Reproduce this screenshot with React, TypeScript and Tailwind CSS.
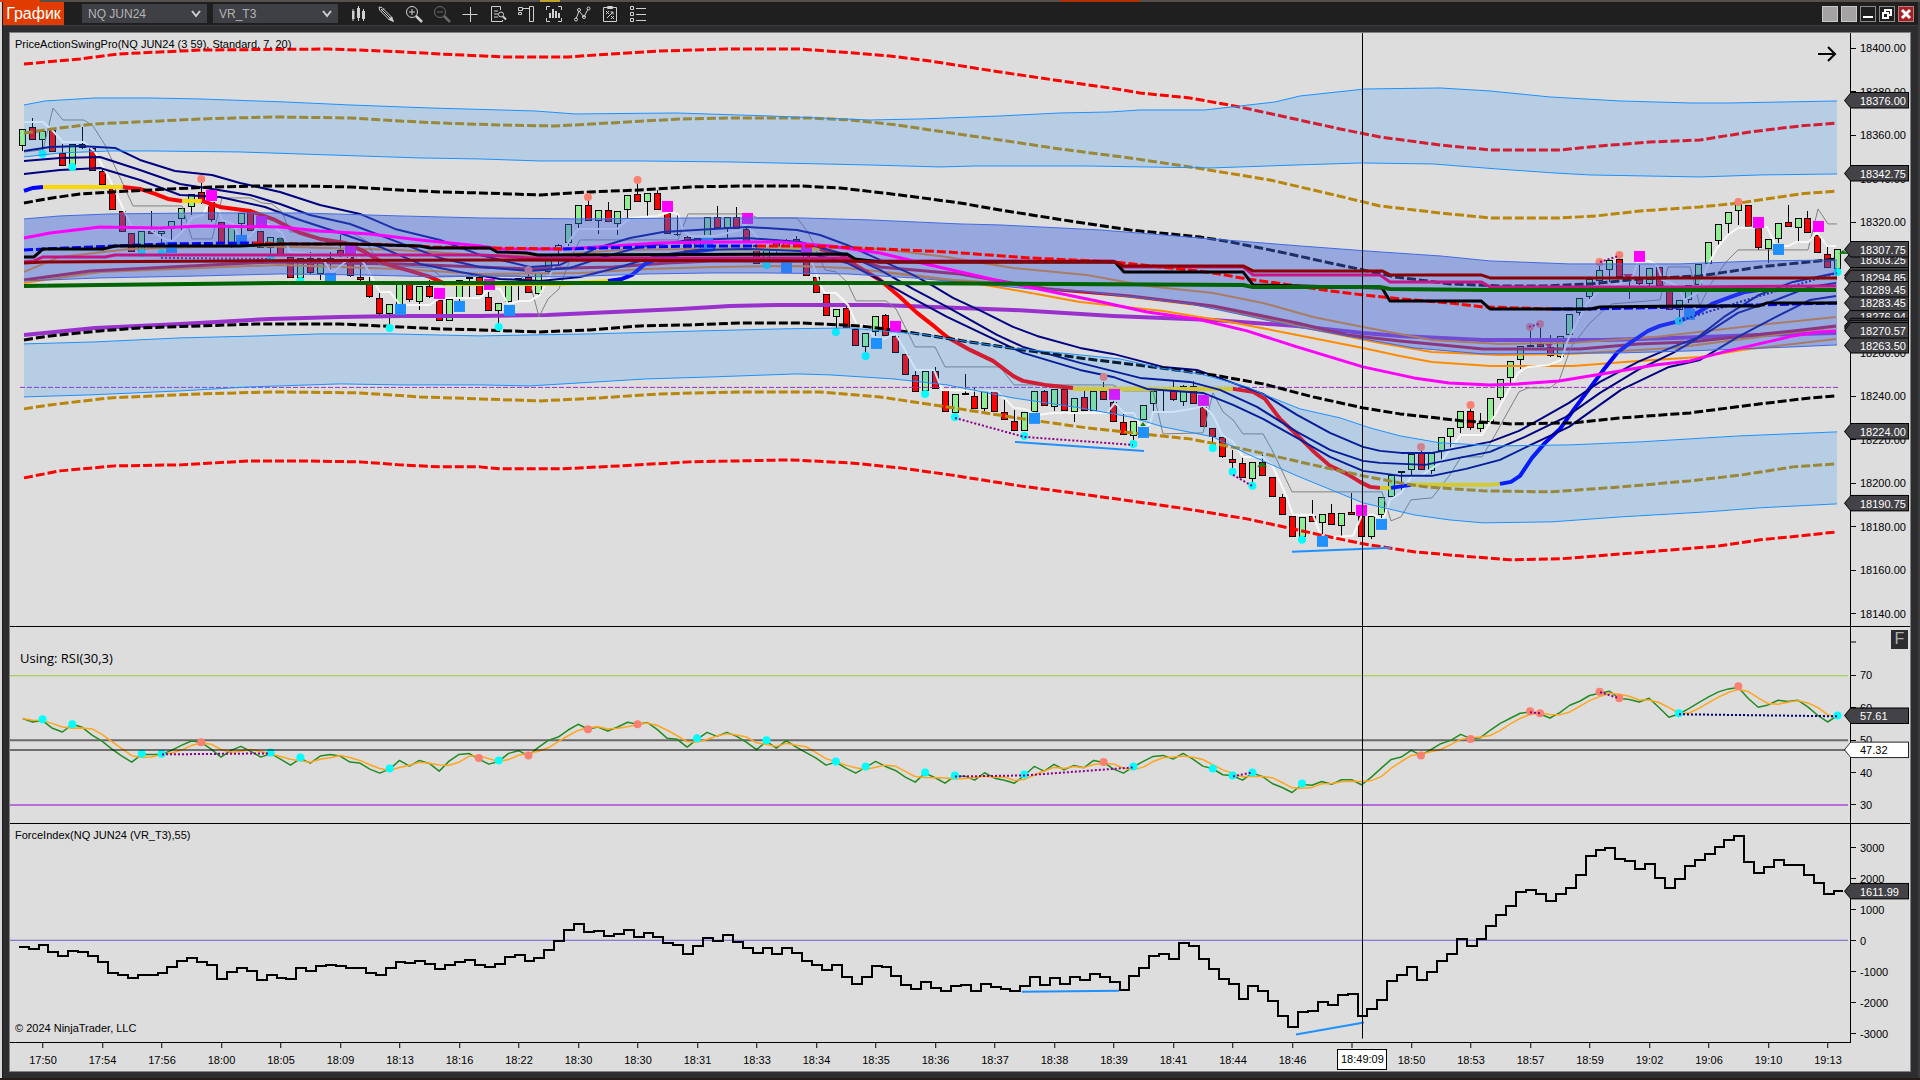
import React from "react";

/* ---------- shared scales ---------- */

const barX = (i: number) => 22.7 + 9.917 * i;

/* [top, bottom, high, low, up] for each bar, in plot units */
type Bar = [number, number, number, number, 0 | 1];
const bars: Bar[] = [
  [129, 146, 129, 151, 1], [127, 140, 118, 140, 0], [131, 140, 131, 150, 1], [130, 152, 130, 152, 0], [153, 166, 144, 166, 0],
  [144, 166, 144, 168, 1], [144, 148, 127, 149, 0], [148, 171, 148, 171, 0], [171, 185, 168, 185, 0], [188, 210, 188, 210, 0],
  [211, 232, 211, 232, 0], [233, 252, 233, 252, 0], [231, 252, 231, 252, 1], [231, 234, 211, 234, 0], [231, 234, 231, 252, 1],
  [221, 229, 221, 242, 1], [208, 219, 208, 230, 1], [194, 207, 194, 215, 1], [192, 203, 182, 204, 0], [202, 220, 202, 222, 0],
  [222, 243, 222, 243, 0], [227, 244, 227, 248, 1], [213, 224, 213, 235, 1], [212, 231, 209, 231, 0], [231, 248, 231, 248, 0],
  [237, 248, 237, 257, 1], [238, 256, 238, 256, 0], [257, 278, 257, 278, 0], [258, 278, 258, 280, 1], [258, 273, 252, 274, 0],
  [258, 274, 258, 280, 1], [258, 259, 252, 272, 1], [250, 256, 235, 257, 0], [257, 276, 257, 277, 0], [277, 280, 263, 281, 0],
  [284, 297, 277, 298, 0], [298, 314, 293, 315, 0], [304, 314, 304, 325, 1], [283, 305, 283, 305, 1], [284, 300, 284, 302, 0],
  [286, 302, 286, 310, 1], [286, 297, 280, 298, 0], [300, 321, 300, 321, 0], [299, 321, 299, 321, 1], [280, 298, 280, 303, 1],
  [277, 279, 277, 298, 1], [277, 295, 273, 295, 0], [297, 311, 292, 311, 0], [303, 311, 303, 323, 1], [284, 302, 284, 305, 1],
  [278, 280, 278, 300, 1], [277, 293, 272, 293, 0], [273, 294, 273, 295, 1], [254, 272, 254, 274, 1], [245, 249, 244, 266, 1],
  [224, 243, 224, 246, 1], [205, 224, 205, 228, 1], [205, 221, 200, 221, 0], [210, 221, 210, 234, 1], [210, 222, 202, 222, 0],
  [211, 224, 211, 235, 1], [195, 210, 195, 218, 1], [194, 202, 183, 202, 0], [193, 202, 193, 216, 1], [193, 210, 190, 210, 0],
  [213, 234, 213, 234, 0], [234, 235, 215, 236, 0], [237, 252, 236, 252, 0], [238, 251, 238, 251, 1], [217, 237, 217, 237, 1],
  [217, 228, 206, 228, 0], [217, 228, 217, 239, 1], [217, 229, 207, 229, 0], [229, 243, 228, 243, 0], [245, 264, 245, 264, 0],
  [247, 260, 247, 263, 1], [240, 249, 239, 255, 0], [240, 251, 239, 251, 1], [239, 250, 236, 250, 0], [252, 276, 252, 276, 0],
  [277, 293, 273, 293, 0], [294, 316, 293, 316, 0], [309, 317, 309, 329, 1], [308, 328, 307, 328, 0], [329, 346, 329, 346, 0],
  [333, 347, 333, 354, 1], [316, 332, 316, 336, 1], [315, 336, 314, 336, 0], [336, 353, 332, 353, 0], [354, 375, 354, 375, 0],
  [375, 392, 371, 392, 0], [371, 391, 371, 391, 1], [371, 389, 367, 389, 0], [390, 412, 390, 412, 0], [394, 413, 394, 413, 1],
  [393, 395, 374, 395, 0], [396, 409, 387, 409, 0], [391, 409, 391, 411, 1], [391, 412, 391, 412, 0], [412, 420, 399, 420, 0],
  [421, 431, 410, 431, 0], [412, 431, 412, 431, 1], [391, 412, 391, 412, 1], [391, 406, 390, 406, 0], [389, 407, 389, 411, 1],
  [389, 411, 389, 411, 0], [398, 412, 398, 422, 1], [397, 411, 387, 411, 0], [391, 411, 391, 411, 1], [391, 400, 382, 400, 0],
  [402, 422, 401, 422, 0], [422, 435, 414, 435, 0], [421, 436, 421, 442, 1], [405, 420, 405, 420, 1], [391, 404, 391, 413, 1],
  [390, 391, 390, 411, 1], [391, 400, 380, 401, 0], [386, 402, 385, 406, 1], [386, 404, 381, 404, 0], [407, 427, 406, 427, 0],
  [428, 437, 428, 445, 0], [437, 457, 437, 458, 0], [459, 463, 450, 468, 0], [463, 478, 457, 478, 0], [462, 479, 462, 483, 1],
  [462, 476, 455, 476, 0], [477, 497, 477, 497, 0], [497, 515, 494, 515, 0], [516, 537, 516, 537, 0], [517, 537, 517, 537, 1],
  [516, 522, 500, 522, 0], [514, 523, 514, 534, 1], [513, 525, 504, 525, 0], [513, 526, 513, 536, 1], [512, 515, 493, 515, 0],
  [516, 537, 516, 537, 0], [516, 537, 516, 539, 1], [497, 515, 497, 518, 1], [475, 497, 475, 497, 1], [471, 473, 471, 492, 1],
  [454, 470, 454, 475, 1], [453, 470, 450, 470, 0], [453, 471, 453, 474, 1], [437, 451, 437, 460, 1], [428, 437, 428, 450, 1],
  [411, 428, 411, 433, 1], [411, 428, 408, 430, 0], [423, 429, 413, 432, 1], [398, 422, 398, 422, 1], [379, 398, 379, 400, 1],
  [361, 378, 361, 383, 1], [346, 360, 346, 369, 1], [345, 347, 330, 347, 1], [344, 347, 327, 347, 0], [347, 356, 335, 357, 0],
  [336, 357, 336, 358, 1], [314, 335, 314, 335, 1], [298, 313, 298, 320, 1], [279, 297, 279, 300, 1], [270, 281, 265, 285, 1],
  [260, 270, 260, 282, 1], [259, 277, 259, 277, 0], [277, 279, 277, 299, 0], [278, 284, 265, 285, 0], [268, 284, 268, 286, 1],
  [267, 286, 267, 286, 0], [287, 310, 286, 310, 0], [300, 310, 300, 318, 1], [285, 300, 285, 303, 1], [264, 285, 264, 285, 1],
  [242, 264, 242, 264, 1], [224, 241, 224, 247, 1], [212, 224, 212, 234, 1], [203, 211, 203, 225, 1], [205, 227, 205, 227, 0],
  [228, 248, 228, 250, 0], [239, 249, 239, 263, 1], [223, 239, 223, 243, 1], [222, 227, 205, 227, 0], [218, 228, 218, 241, 1],
  [218, 233, 211, 233, 0], [235, 253, 235, 253, 0], [254, 268, 247, 268, 0], [249, 269, 249, 269, 1],
];

/* oscillator samples, three units per plot unit */
const rsi = [
  295, 305, 301, 324, 335, 312, 321, 344, 362, 386, 407, 425, 402, 402, 402, 390, 375, 362, 366, 386, 410, 390, 378, 393, 410,
  400, 416, 434, 414, 428, 407, 402, 407, 425, 428, 446, 458, 446, 420, 437, 420, 429, 452, 422, 402, 399, 416, 431, 423, 399,
  391, 406, 381, 360, 350, 329, 312, 326, 320, 332, 320, 306, 312, 307, 328, 354, 357, 380, 357, 336, 348, 336, 348, 366, 388,
  363, 383, 361, 380, 397, 413, 434, 425, 443, 458, 441, 423, 438, 450, 470, 485, 458, 472, 488, 467, 467, 479, 457, 473, 479,
  488, 465, 438, 452, 432, 448, 435, 442, 420, 426, 446, 458, 439, 423, 408, 405, 416, 399, 416, 437, 445, 463, 466, 479, 458,
  468, 489, 501, 516, 492, 494, 483, 491, 478, 478, 493, 470, 443, 417, 410, 390, 404, 388, 370, 360, 342, 355, 352, 329, 309,
  294, 279, 275, 281, 293, 277, 255, 243, 226, 219, 213, 234, 238, 245, 234, 262, 291, 281, 265, 247, 230, 215, 206, 202, 235,
  261, 254, 240, 244, 240, 260, 285, 305, 286,
];

const force = [
  380, 386, 375, 396, 408, 393, 396, 408, 426, 459, 465, 474, 465, 465, 459, 441, 423, 414, 426, 435, 477, 456, 444, 453, 480,
  465, 474, 477, 444, 453, 438, 435, 438, 444, 444, 459, 465, 444, 426, 429, 423, 432, 447, 435, 426, 420, 435, 441, 432, 411,
  405, 423, 414, 390, 363, 330, 312, 336, 333, 348, 342, 330, 351, 339, 351, 369, 375, 402, 378, 354, 363, 345, 366, 384, 399,
  384, 402, 384, 399, 423, 435, 450, 435, 471, 492, 471, 438, 441, 468, 495, 507, 486, 504, 513, 498, 495, 513, 492, 501, 507,
  513, 498, 471, 495, 474, 492, 471, 480, 462, 471, 486, 510, 468, 444, 408, 402, 417, 369, 378, 417, 447, 477, 492, 537, 498,
  513, 543, 588, 621, 576, 573, 546, 555, 525, 522, 588, 567, 540, 483, 465, 441, 480, 456, 423, 402, 357, 378, 357, 318, 285,
  258, 216, 210, 222, 243, 222, 204, 165, 108, 90, 84, 117, 123, 147, 132, 174, 204, 177, 138, 120, 102, 81, 60, 48, 126, 159,
  141, 120, 135, 135, 165, 189, 222, 213,
];

const rsiY = (v: number) => 620 + v / 3;
const forceY = (v: number) => 820 + v / 3;

const rsiLine = rsi.map((v, i) => `${barX(i).toFixed(1)},${rsiY(v).toFixed(1)}`).join(" ");
const rsiSignal = rsi
  .map((_, i) => {
    const part = rsi.slice(Math.max(0, i - 2), i + 1);
    const mean = part.reduce((a, b) => a + b, 0) / part.length;
    return `${barX(i).toFixed(1)},${rsiY(mean).toFixed(1)}`;
  })
  .join(" ");
const forceLine = force
  .map((v, i) => {
    const y = Math.round(forceY(v));
    return `${Math.round(22.7 + 9.917 * (i - 0.4))},${y} ${Math.round(22.7 + 9.917 * (i + 0.6))},${y}`;
  })
  .join(" ");

/* ---------- price overlays ---------- */

const bands = [
  {
    fill: "rgba(30,144,255,0.2)",
    stroke: "#1e90ff",
    top: "24,105 45,101 95,98 150,98 200,99 285,102 350,105 430,108 535,111 575,114 676,113 770,116 870,120 920,119 1000,116 1060,113 1110,112 1140,110 1205,110 1240,106 1275,102 1300,96 1365,89 1440,88 1490,91 1550,97 1620,101 1690,103 1730,103 1837,101",
    bottom: "1837,174 1760,175 1700,177 1590,175 1554,173 1497,169 1433,164 1361,163 1297,165 1211,168 1083,166 976,166 940,167 869,165 730,162 640,161 540,161 480,159 420,158 330,155 240,152 150,151 110,151 60,153 24,157",
  },
  {
    fill: "rgba(30,144,255,0.2)",
    stroke: "#1e90ff",
    top: "24,344 95,342 180,338 260,336 320,334 390,334 480,336 590,334 700,331 780,329 850,328 880,331 920,334 963,341 1010,348 1080,355 1120,359 1160,368 1200,374 1247,387 1270,397 1300,409 1340,418 1370,428 1400,436 1440,443 1500,446 1570,445 1640,442 1740,436 1837,432",
    bottom: "1837,504 1759,508 1707,512 1621,517 1552,522 1483,523 1449,520 1414,515 1380,507 1363,503 1297,476 1247,454 1213,437 1163,427 1130,417 1080,408 1013,398 947,385 893,379 830,375 797,374 713,377 647,379 580,383 530,386 480,385 400,385 340,384 250,387 180,391 90,395 24,397",
  },
  {
    fill: "rgba(65,105,225,0.45)",
    stroke: "#4169e1",
    top: "24,219 60,216 110,214 200,213 300,213 400,216 480,218 580,219 700,218 800,218 870,220 960,224 1000,225 1100,230 1200,238 1300,246 1380,252 1440,256 1490,261 1570,264 1680,264 1760,261 1837,260",
    bottom: "1837,345 1793,347 1690,351 1621,353 1483,354 1414,348 1363,339 1297,327 1247,316 1190,304 1130,297 1080,291 1030,289 980,284 913,278 847,274 763,273 713,273 647,274 563,277 480,276 440,277 360,275 280,274 200,276 100,278 24,281",
  },
];

const dashed = [
  { c: "#ff0000", p: "24,64 80,59 118,54 202,50 328,49 358,50 404,52 440,54 505,57 568,57 610,54 660,51 726,49 800,49 840,52 890,56 930,61 1000,72 1054,80 1110,88 1140,93 1190,98 1240,107 1290,118 1340,129 1380,137 1440,145 1490,150 1560,150 1600,146 1650,142 1700,140 1750,132 1800,126 1837,123" },
  { c: "#b8860b", p: "24,133 52,129 94,124 160,121 200,119 235,118 275,117 350,118 400,121 440,123 500,125 555,126 610,123 680,119 730,118 810,118 850,120 897,125 930,130 1000,140 1060,149 1130,158 1190,167 1270,180 1330,194 1380,206 1440,213 1490,218 1560,218 1596,216 1640,211 1700,207 1740,203 1800,194 1837,191" },
  { c: "#000000", p: "24,203 52,198 80,194 112,192 170,189 215,187 260,186 300,186 350,187 400,190 440,192 480,193 540,195 590,192 640,190 690,187 740,186 800,186 840,188 900,195 960,203 1000,210 1063,220 1130,230 1200,237 1230,242 1280,252 1330,263 1363,270 1395,277 1450,284 1500,286 1545,286 1590,284 1640,279 1700,276 1760,267 1837,259" },
  { c: "#000000", p: "24,340 50,336 100,331 140,328 200,326 260,324 340,324 400,327 440,329 480,330 540,332 590,330 640,326 690,325 740,323 800,323 860,326 900,331 963,341 1023,350 1087,359 1153,367 1213,375 1263,384 1313,397 1363,408 1400,414 1463,421 1511,424 1573,423 1621,418 1690,413 1752,405 1810,398 1836,396" },
  { c: "#b8860b", p: "24,409 50,405 110,398 200,394 275,392 360,393 420,397 480,399 540,401 600,398 660,394 740,392 820,392 880,397 960,409 1023,419 1087,428 1133,433 1190,439 1247,450 1313,465 1363,476 1400,483 1425,487 1483,491 1552,492 1621,487 1690,481 1742,475 1793,467 1836,464" },
  { c: "#ff0000", p: "24,478 60,471 115,466 180,465 250,461 300,461 360,462 400,465 440,467 480,467 500,469 560,469 620,466 690,462 790,460 850,463 900,468 950,475 1020,486 1087,495 1180,508 1247,519 1320,535 1363,544 1414,552 1460,556 1510,560 1560,559 1610,555 1660,551 1720,546 1760,540 1800,536 1837,532" },
];

const lowerLines = [
  { c: "#9932cc", w: 4, p: "24,335 95,328 180,324 270,319 340,317 400,316 480,316 547,315 613,312 680,309 730,306 780,305 880,305 960,308 1013,310 1113,316 1213,320 1297,326 1363,333 1400,336 1483,340 1604,340 1673,338 1759,335 1836,333" },
  { c: "#ff8c00", w: 2, p: "24,272 60,257 130,249 200,247 250,246 400,250 480,255 540,256 620,250 700,249 800,247 880,249 947,257 1013,268 1087,275 1147,286 1213,293 1263,303 1313,317 1363,327 1400,334 1432,340 1500,344 1569,343 1655,337 1690,333 1759,325 1836,317" },
  { c: "#ff8c00", w: 2, p: "24,283 100,272 200,268 280,265 400,269 480,274 580,273 647,269 713,267 797,266 847,268 913,275 960,281 997,287 1080,302 1163,311 1230,322 1297,335 1363,348 1400,356 1432,362 1490,366 1573,366 1638,361 1700,357 1742,350 1836,339" },
  { c: "#ff8c00", w: 2, p: "880,272 940,279 1000,283 1047,288 1130,297 1213,307 1297,326 1380,343 1432,352 1500,355 1569,354 1673,348 1759,337 1836,327" },
  { c: "#c8102e", w: 3, p: "24,280 90,271 170,267 250,263 280,262 400,264 480,267 530,269 613,267 667,263 713,261 863,261 880,267 960,274 1047,289 1130,296 1213,306 1297,323 1347,335 1400,341 1483,349 1580,349 1638,344 1690,342 1793,331 1836,326" },
  { c: "#000080", w: 2, p: "24,151 50,147 80,146 115,148 140,160 175,171 212,175 240,183 280,192 320,205 360,214 395,229 440,240 480,255 530,267 560,265 597,248 630,238 663,232 713,229 747,227 797,230 820,235 847,245 880,260 913,275 933,286 953,298 983,312 1013,327 1037,336 1080,348 1113,354 1163,367 1197,370 1230,382 1263,394 1297,415 1330,433 1363,447 1380,451 1401,453 1432,453 1459,448 1490,442 1519,431 1539,420 1569,403 1600,382 1638,362 1673,347 1697,338 1724,317 1759,295 1793,282 1836,273" },
  { c: "#000080", w: 2, p: "24,161 60,158 100,157 140,170 180,184 212,189 250,195 280,204 310,215 350,224 400,243 440,258 480,267 530,271 570,268 600,258 640,247 690,240 747,238 800,242 847,255 880,270 913,289 947,307 997,335 1023,347 1080,363 1140,378 1190,382 1220,390 1257,407 1297,432 1330,450 1363,461 1380,463 1425,465 1459,458 1490,452 1525,437 1566,417 1600,393 1638,370 1673,353 1707,333 1738,313 1776,300 1810,287 1836,283" },
  { c: "#000080", w: 2, p: "24,174 60,170 100,168 140,180 180,195 220,197 265,207 300,220 340,233 380,247 420,264 460,272 500,279 540,281 580,277 620,267 660,255 700,250 747,249 800,251 847,263 880,280 910,297 947,317 1023,353 1080,370 1113,377 1147,389 1203,393 1233,405 1263,419 1297,438 1330,457 1363,471 1401,476 1432,476 1466,469 1500,460 1535,443 1569,427 1621,390 1669,367 1700,360 1738,337 1776,317 1810,300 1836,296" },
];

const trend = [
  { c: "#0000ff", p: "24,191 33,188 43,187" },
  { c: "#ffd700", p: "43,187 123,187" },
  { c: "#ff0000", p: "123,187 140,189 155,194 168,199 182,201" },
  { c: "#ffd700", p: "182,201 202,201" },
  { c: "#ff0000", p: "202,201 220,207 250,211 275,220 300,233 320,239 345,243 365,252 385,264 410,271 430,277 445,284" },
  { c: "#ffd700", p: "445,284 560,284 610,281" },
  { c: "#0000ff", p: "608,281 622,279 632,275 645,264 660,258 690,252 715,249" },
  { c: "#ffd700", p: "715,249 820,249" },
  { c: "#ff0000", p: "820,249 840,254 855,265 880,280 900,297 917,313 935,327 947,337 970,350 993,361 1013,376 1023,381 1045,385 1073,388" },
  { c: "#ffd700", p: "1073,389 1233,389" },
  { c: "#ff0000", p: "1233,389 1253,392 1265,399 1280,419 1297,435 1313,451 1330,466 1347,474 1360,482 1370,487 1380,488" },
  { c: "#ffd700", p: "1380,488 1391,488" },
  { c: "#0000ff", p: "1391,488 1411,485" },
  { c: "#ffd700", p: "1411,485 1490,485 1500,484" },
  { c: "#0000ff", p: "1500,484 1511,482 1520,476 1532,458 1545,443 1560,429 1575,408 1590,388 1605,368 1617,353 1630,343 1648,331 1660,326 1680,321 1697,313 1712,304 1728,298 1745,292 1765,289" },
];

const whiteStop =
  "24,122 43,122 52,130 63,142 84,142 95,152 110,180 125,213 133,228 150,230 162,238 172,241 182,232 192,218 203,215 210,201 218,208 222,220 232,223 240,238 250,236 262,222 272,226 282,233 290,252 320,255 332,273 345,262 355,252 365,265 380,292 390,292 400,305 430,305 440,298 480,298 490,288 500,289 508,304 520,301 530,301 540,295 550,275 560,255 570,240 578,229 617,229 630,218 657,216 670,212 678,214 683,230 690,236 715,236 740,230 745,224 757,237 770,250 800,252 812,262 820,285 825,293 836,293 848,305 857,325 866,325 874,337 885,339 895,333 905,350 916,370 934,370 942,390 997,391 1014,408 1024,409 1037,415 1053,413 1107,413 1115,403 1124,413 1134,413 1142,430 1150,424 1153,412 1173,412 1197,408 1203,406 1213,415 1222,435 1233,442 1243,457 1262,457 1272,465 1285,493 1293,515 1313,515 1322,538 1353,536 1362,515 1373,515 1383,520 1390,500 1401,493 1411,477 1421,476 1440,463 1461,435 1482,435 1494,417 1518,373 1528,367 1549,365 1561,360 1568,340 1587,303 1600,290 1621,283 1631,280 1638,262 1649,261 1657,265 1662,280 1676,285 1685,300 1697,293 1707,267 1717,248 1728,235 1738,228 1767,227 1776,246 1788,246 1797,242 1809,242 1817,232 1827,246 1836,246";
const grayStop =
  "24,152 43,150 53,108 63,120 84,120 93,126 105,145 133,206 182,206 192,239 212,239 222,198 250,198 262,203 272,204 282,212 290,232 350,232 365,240 380,265 430,268 440,276 520,276 530,283 539,317 548,299 559,289 570,260 580,240 678,240 688,214 750,214 757,218 797,218 808,232 825,270 836,272 847,282 856,301 886,301 896,309 915,347 935,347 945,367 1000,367 1014,385 1113,385 1123,391 1153,391 1163,434 1203,433 1213,393 1223,412 1233,420 1243,434 1263,434 1272,450 1292,492 1382,492 1391,521 1401,517 1411,500 1432,498 1450,475 1461,457 1482,457 1494,437 1519,392 1528,388 1550,388 1559,381 1571,347 1590,323 1604,310 1612,304 1660,300 1668,267 1690,267 1700,306 1710,285 1726,262 1738,250 1808,250 1818,209 1828,224 1837,224";

const upperLines = [
  { c: "#c71585", w: 3, p: "24,262 34,261 43,257 105,257 115,255 480,255 500,256 530,258 850,258 855,261 1113,261 1123,267 1243,267 1253,275 1380,275 1390,282 1481,282 1490,287 1690,287 1836,286" },
  { c: "#ff00ff", w: 3, p: "24,238 50,233 100,227 160,228 200,226 280,227 320,231 370,234 420,240 480,246 500,249 563,249 613,246 657,243 713,242 780,242 830,246 880,253 930,265 1013,284 1097,301 1147,312 1197,319 1247,331 1297,347 1363,367 1414,378 1449,383 1490,385 1518,384 1559,381 1614,372 1655,365 1690,361 1724,352 1759,344 1793,336 1817,332 1836,331" },
  { c: "#000000", w: 3, p: "24,257 34,257 43,249 103,249 115,246 240,246 280,244 350,244 420,246 430,248 490,248 497,252 527,253 538,255 847,254 855,259 880,262 1115,262 1124,272 1243,272 1253,285 1382,288 1390,301 1481,301 1490,309 1590,309 1600,307 1683,306 1759,306 1767,303 1837,303" },
  { c: "#8b0000", w: 3, p: "24,263 43,262 230,261 480,260 850,261 880,262 1115,262 1123,266 1243,266 1253,271 1382,271 1390,275 1481,275 1490,278 1837,278" },
  { c: "#006400", w: 4, p: "24,286 100,285 280,283 880,283 1243,285 1253,287 1380,287 1390,289 1490,290 1836,290" },
];

const midSegments = [
  { c: "#0000ff", p: "24,250 67,248 117,246 167,244 253,243" },
  { c: "#ff0000", p: "253,243 300,244 367,244 433,247 480,248 563,249" },
  { c: "#0000ff", p: "563,249 647,247 700,246 757,246" },
  { c: "#ff0000", p: "757,246 813,246 880,249 947,252 1030,258 1113,262 1180,269 1213,273 1247,279 1297,286 1330,291 1363,295 1400,299 1449,303 1483,307 1552,309" },
  { c: "#0000ff", p: "1552,309 1587,309 1690,307 1759,305 1837,303" },
];

const cyanDots: [number, number][] = [
  [2, 154], [5, 167], [12, 253], [14, 253], [25, 258], [28, 281], [37, 328], [48, 327], [75, 265], [82, 332], [85, 356], [91, 394],
  [94, 417], [101, 436], [112, 444], [120, 448], [122, 472], [124, 486], [129, 540], [167, 321], [183, 272],
];
const salmonDots: [number, number][] = [
  [18, 179], [51, 270], [57, 197], [62, 180], [109, 377], [141, 447], [146, 405], [152, 327], [153, 324], [159, 262], [161, 255], [173, 202],
];
const magentaMarks: [number, number][] = [
  [19, 195], [24, 221], [33, 250], [42, 293], [47, 284], [65, 206], [73, 218], [79, 250], [88, 326], [110, 394], [119, 400], [135, 510],
  [163, 256], [175, 222], [181, 226],
];
const blueMarks: [number, number][] = [
  [15, 247], [22, 240], [31, 278], [38, 309], [44, 306], [49, 310], [69, 243], [77, 267], [86, 343], [102, 418], [113, 432], [131, 541],
  [137, 524], [168, 314], [177, 249],
];
const rsiCyan: [number, number][] = [
  [2, 297], [5, 312], [12, 400], [14, 400], [25, 396], [28, 411], [37, 444], [48, 420], [68, 354], [75, 360], [82, 423], [85, 438], [91, 456],
  [94, 465], [101, 462], [112, 438], [120, 444], [122, 465], [124, 456], [129, 489], [167, 279], [183, 286],
];
const rsiSalmon: [number, number][] = [
  [18, 366], [46, 413], [51, 405], [57, 327], [62, 312], [109, 425], [141, 405], [146, 356], [152, 273], [153, 279], [159, 215], [161, 234],
  [173, 198],
];

function Line({ p, c, w, dash }: { p: string; c: string; w: number; dash?: string }) {
  return <polyline points={p} fill="none" stroke={c} strokeWidth={w} strokeDasharray={dash} strokeLinejoin="round" />;
}

function PricePlot() {
  return (
    <svg className="absolute inset-0 size-full" viewBox="10 33 1840 593" preserveAspectRatio="none" aria-label="Price chart">
      {bars.map(([t, b, h, l, up], i) => {
        const x = Math.round(barX(i) - 0.3);
        return (
          <g key={i} shapeRendering="crispEdges">
            <rect x={x} y={h} width={1} height={Math.max(l - h, 1)} fill="#000" />
            <rect x={x - 3} y={t} width={7} height={Math.max(b - t, 1)} fill="#000" />
            {b - t > 2 && <rect x={x - 2} y={t + 1} width={5} height={b - t - 2} fill={up ? "#90ee90" : "#ff0000"} />}
          </g>
        );
      })}
      <path d="M20 387.5H1840" stroke="#9932cc" strokeDasharray="5 2" />
      {lowerLines.slice(0, 5).map((l, i) => (
        <Line key={i} {...l} />
      ))}
      <Line p={grayStop} c="#808080" w={1} />
      <Line p={whiteStop} c="#f8f8f8" w={2} />
      {trend.map((l, i) => (
        <Line key={i} {...l} w={4} />
      ))}
      {lowerLines.slice(5).map((l, i) => (
        <Line key={i} {...l} />
      ))}
      {dashed.map((l, i) => (
        <Line key={i} {...l} w={3} dash="9 3" />
      ))}
      {cyanDots.map(([i, y]) => (
        <circle key={i} cx={barX(i)} cy={y} r={4} fill="#00ffff" />
      ))}
      {salmonDots.map(([i, y]) => (
        <circle key={i} cx={barX(i)} cy={y} r={4} fill="#fa8072" />
      ))}
      {magentaMarks.map(([i, y]) => (
        <rect key={i} x={Math.round(barX(i)) - 5} y={y - 5} width={11} height={11} fill="#ff00ff" />
      ))}
      {blueMarks.map(([i, y]) => (
        <rect key={i} x={Math.round(barX(i)) - 5} y={y - 5} width={11} height={11} fill="#1e90ff" />
      ))}
      <path d="M280 237l4 5h-8zM1262 462l5 5h-10zM1143 422l3 4h-6zM1843 250l5 4h-9z" fill="#128012" />
      <path d="M1628 279l-5 -5h10zM1549 348l-4 -4h8z" fill="#cc1144" />
      <Line p="161,258 270,259" c="#8b008b" w={2} dash="2 2" />
      <Line p="955,418 1024,437 1133,445" c="#8b008b" w={2} dash="2 2" />
      <Line p="1233,475 1252,486" c="#8b008b" w={2} dash="2 2" />
      <Line p="1529,327 1539,324" c="#8b008b" w={2} dash="2 2" />
      <Line p="1600,262 1619,256" c="#8b008b" w={2} dash="2 2" />
      <Line p="1679,321 1740,302 1837,273" c="#00008b" w={2} dash="2 2" />
      <Line p="1015,442 1144,451" c="#1e90ff" w={2} />
      <Line p="1292,552 1391,548" c="#1e90ff" w={2} />
      {bands.map((b, i) => (
        <g key={i}>
          <polygon points={`${b.top} ${b.bottom}`} fill={b.fill} />
          <Line p={b.top} c={b.stroke} w={1} />
          <Line p={b.bottom} c={b.stroke} w={1} />
        </g>
      ))}
      {upperLines.slice(0, 2).map((l, i) => (
        <Line key={i} {...l} />
      ))}
      {midSegments.map((l, i) => (
        <Line key={i} {...l} w={3} dash="9 3" />
      ))}
      {upperLines.slice(2).map((l, i) => (
        <Line key={i} {...l} />
      ))}
      <path d="M1818 54H1835M1828 47L1835 54L1828 61" stroke="#000" strokeWidth={2} fill="none" />
      <path d="M1362.5 33V626" stroke="#000" />
    </svg>
  );
}

function RsiPlot() {
  return (
    <svg className="absolute inset-0 size-full" viewBox="10 627 1840 196" preserveAspectRatio="none" aria-label="RSI chart">
      <path d="M10 675.5H1848" stroke="#9acd32" />
      <path d="M10 804.5H1848" stroke="#9400d3" />
      <path d="M10 740H1848" stroke="#696969" strokeWidth={2} />
      <Line p={rsiLine} c="#228b22" w={1.5} />
      <Line p={rsiSignal} c="#ffa520" w={1.5} />
      {rsiCyan.map(([i, v]) => (
        <circle key={i} cx={barX(i)} cy={rsiY(v)} r={4} fill="#00ffff" />
      ))}
      {rsiSalmon.map(([i, v]) => (
        <circle key={i} cx={barX(i)} cy={rsiY(v)} r={4} fill="#fa8072" />
      ))}
      <Line p="162,754 270,753" c="#8b008b" w={2} dash="2 2" />
      <Line p="955,776 1024,775 1133,767" c="#8b008b" w={2} dash="2 2" />
      <Line p="1233,776 1252,772" c="#8b008b" w={2} dash="2 2" />
      <Line p="1530,712 1540,713" c="#8b008b" w={2} dash="2 2" />
      <Line p="1600,692 1619,698" c="#8b008b" w={2} dash="2 2" />
      <Line p="1679,714 1837,716" c="#00008b" w={2} dash="2 2" />
      <path d="M10 749.5H1850M1362.5 627V823" stroke="#000" />
    </svg>
  );
}

function ForcePlot() {
  return (
    <svg className="absolute inset-0 size-full" viewBox="10 824 1840 218" preserveAspectRatio="none" aria-label="Force index chart">
      <path d="M10 940.5H1848" stroke="#6a5acd" />
      <polyline points={forceLine} fill="none" stroke="#000" strokeWidth={2} strokeLinejoin="miter" shapeRendering="crispEdges" />
      <Line p="1022,992 1119,991" c="#1e90ff" w={2} />
      <Line p="1296,1035 1364,1023" c="#1e90ff" w={2} />
      <path d="M1362.5 824V1039" stroke="#000" />
    </svg>
  );
}

/* ---------- axes ---------- */

type Mark = { label: string; at: number };

function Tag({ label, top, light }: { label: string; top: string; light?: boolean }) {
  return (
    <div className="absolute -left-[7px] right-px h-[17px] -translate-y-1/2" style={{ top }}>
      <div className={`size-full p-px [clip-path:polygon(7px_0,100%_0,100%_100%,7px_100%,0_50%)] ${light ? "bg-[#222]" : "bg-black"}`}>
        <div
          className={`flex size-full items-center pl-[15px] [clip-path:polygon(6px_0,100%_0,100%_100%,6px_100%,0_50%)] ${
            light ? "bg-white text-black" : "bg-[#434347] text-white"
          }`}
        >
          {label}
        </div>
      </div>
    </div>
  );
}

function Axis({ from, size, ticks, tags, children }: { from: number; size: number; ticks: Mark[]; tags: (Mark & { light?: boolean })[]; children?: React.ReactNode }) {
  const top = (at: number) => `${((at - from) / size) * 100}%`;
  return (
    <div className="relative w-[60px] shrink-0 border-l border-black">
      {ticks.map((t) => (
        <div key={t.at} className="absolute left-0 flex -translate-y-1/2 items-center gap-1 leading-4" style={{ top: top(t.at) }}>
          <span className="h-px w-[5px] bg-black" />
          {t.label}
        </div>
      ))}
      {tags.map((t, i) => (
        <Tag key={i} label={t.label} top={top(t.at)} light={t.light} />
      ))}
      {children}
    </div>
  );
}

const priceTicks: Mark[] = Array.from({ length: 14 }, (_, k) => ({ label: `${18400 - 20 * k}.00`, at: 48.5 + 43.5 * k }));
const priceTags: Mark[] = [
  { label: "18376.00", at: 100.5 },
  { label: "18342.75", at: 173.5 },
  { label: "18303.25", at: 260 },
  { label: "18307.75", at: 249.5 },
  { label: "", at: 275.5 },
  { label: "18263.50", at: 345.5 },
  { label: "18276.94", at: 317 },
  { label: "", at: 326 },
  { label: "", at: 328 },
  { label: "18270.57", at: 330.5 },
  { label: "18294.85", at: 278 },
  { label: "18283.45", at: 303 },
  { label: "18289.45", at: 289.5 },
  { label: "18224.00", at: 431.5 },
  { label: "18190.75", at: 503.5 },
];

const times = [
  "17:50", "17:54", "17:56", "18:00", "18:05", "18:09", "18:13", "18:16", "18:22", "18:30", "18:30", "18:31", "18:33", "18:34", "18:35", "18:36",
  "18:37", "18:38", "18:39", "18:41", "18:44", "18:46", "", "18:50", "18:53", "18:57", "18:59", "19:02", "19:06", "19:10", "19:13",
];

/* ---------- toolbar ---------- */

function Glyph({ children, dim }: { children: React.ReactNode; dim?: boolean }) {
  return (
    <svg viewBox="0 0 18 18" className={`size-[18px] ${dim ? "text-[#6a6a6a]" : "text-[#d0d0d0]"}`} fill="none" stroke="currentColor" aria-hidden="true">
      {children}
    </svg>
  );
}

const tools: { name: string; dim?: boolean; art: React.ReactNode }[] = [
  { name: "Bars", art: <><path d="M4 4v12M9.500 1v15M14.500 4v12" /><path d="M3 6h2.500v8H3zM8 3h3v10H8zM13 6h3v8h-3z" fill="currentColor" stroke="none" /></> },
  { name: "Draw", art: <><path d="M2 2l3 .5 10 10-2.500 2.500-10-10zM4.500 6.500l2.500-3M4 4l10 10" /><path d="M14.500 12l2 4.500-4.500-2z" fill="currentColor" /></> },
  { name: "Zoom in", art: <><circle cx="7" cy="7" r="5.500" /><path d="M4 7h6M7 4v6" /><path d="M11 11l6 6" strokeWidth="2.500" /></> },
  { name: "Zoom out", dim: true, art: <><circle cx="7" cy="7" r="5.500" /><path d="M4 7h6" /><path d="M11 11l6 6" strokeWidth="2.500" /></> },
  { name: "Crosshair", art: <path d="M1.500 9.500h15M9.500 2v15" /> },
  { name: "Data box", art: <><path d="M11.500 5V1.500h-9v15h11v-1.500M5 6h4M5 9h4M5 12h4" /><circle cx="12" cy="9.500" r="2.500" /><path d="M14 11.500l3 3" strokeWidth="2" /></> },
  { name: "Chart trader", art: <><path d="M12.500 1.500h4v15h-4zM1.500 2.500h4v3h-4zM1.500 7.500h3v2h-3zM5.500 3.500h7" /></> },
  { name: "Data series", art: <><path d="M5 1.500H1.500V5M13 1.500h3.500V5M5 16.500H1.500V13M13 16.500h3.500V13" /><path d="M4 8h2v5H4zM7 4h2v9H7zM10 6h2v7h-2zM13 8h2v5h-2z" fill="currentColor" stroke="none" /></> },
  { name: "Indicators", art: <><path d="M3 14L6 6l5 6 4-8" /><circle cx="3" cy="14.500" r="1.500" /><circle cx="6" cy="5" r="1.500" /><circle cx="11" cy="12" r="1.500" /><circle cx="15.500" cy="3.500" r="1.500" /></> },
  { name: "Strategies", art: <><path d="M2.500 2.500h13v14h-13zM6.500 1.500h5v2h-5zM5 6l3 3M8 6L5 9M10 11l3 3M13 11l-3 3M6 13l6-6M9.500 7H12v2.500" /></> },
  { name: "Properties", art: <path d="M1.500 1.500h3v3h-3zM1.500 7.500h3v3h-3zM1.500 13.500h3v3h-3zM7 3.500h10M7 9.500h10M7 15.500h10" /> },
];

function Picker({ label, value }: { label: string; value: string }) {
  return (
    <div className="relative h-[19px] w-[125px]">
      <select aria-label={label} defaultValue={value} className="size-full appearance-none bg-[#3f3f46] pl-1.5 text-xs leading-4 text-[#b4b4b4]">
        <option>{value}</option>
      </select>
      <svg viewBox="0 0 10 8" className="pointer-events-none absolute top-[6px] right-[6px] h-2 w-2.5" fill="none" stroke="#d0d0d0" strokeWidth="2" aria-hidden="true">
        <path d="M1 1l4 5 4-5" />
      </svg>
    </div>
  );
}

function WindowButton({ name, className, children }: { name: string; className: string; children?: React.ReactNode }) {
  return (
    <button aria-label={name} className={`flex size-4 items-center justify-center border ${className}`}>
      {children}
    </button>
  );
}

export default function App() {
  return (
    <div className="flex h-screen w-full flex-col overflow-hidden bg-[#2d2d30] font-['Liberation_Sans',Arial,sans-serif] text-[11px] text-black">
      <div className="flex h-0.5 shrink-0 bg-[#55504c]">
        <div className="w-10 bg-[#e03c00]" />
        <div className="ml-[500px] w-5 bg-[#c0a030]" />
        <div className="ml-[500px] w-20 bg-[#b03000]" />
      </div>
      <div className="flex min-h-0 flex-1">
        <div className="w-0.5 shrink-0 bg-[#d8d8d8]" />
        <div className="flex min-w-0 flex-1 flex-col border-l border-[#1a1a1a]">
          <header className="flex h-6 shrink-0 items-center border-b border-[#3c3c3c] bg-[#1f1f1f] pr-1">
            <h1 className="flex h-full w-[61px] items-center justify-center bg-[#e03c00] text-base leading-5 text-white">График</h1>
            <div className="ml-[18px] flex gap-1.5">
              <Picker label="Instrument" value="NQ JUN24" />
              <Picker label="Interval" value="VR_T3" />
            </div>
            <nav className="ml-[11px] flex gap-2.5">
              {tools.map((t) => (
                <button key={t.name} aria-label={t.name} title={t.name}>
                  <Glyph dim={t.dim}>{t.art}</Glyph>
                </button>
              ))}
            </nav>
            <div className="ml-auto flex gap-[3px]">
              <WindowButton name="Link instrument" className="border-[#c8c8c8] bg-[#a5a2a3]" />
              <WindowButton name="Link interval" className="border-[#c8c8c8] bg-[#a5a2a3]" />
              <WindowButton name="Minimize" className="border-[#8a8a8a] bg-[#1f1f1f]">
                <svg viewBox="0 0 14 14" className="size-3.5" aria-hidden="true"><path d="M2 10h10" stroke="#fff" strokeWidth="2" /></svg>
              </WindowButton>
              <WindowButton name="Restore" className="border-[#8a8a8a] bg-[#1f1f1f]">
                <svg viewBox="0 0 14 14" className="size-3.5" fill="none" stroke="#fff" strokeWidth="2" aria-hidden="true"><path d="M5 5V3h6v5H9M3 6h5v5H3z" /></svg>
              </WindowButton>
              <WindowButton name="Close" className="border-[#b08080] bg-[#a82025]">
                <svg viewBox="0 0 14 14" className="size-3.5" stroke="#fff" strokeWidth="3" aria-hidden="true"><path d="M3 3l8 8M11 3l-8 8" /></svg>
              </WindowButton>
            </div>
          </header>

          <main className="mt-1.5 mr-[7px] mb-1.5 ml-1.5 flex min-h-0 flex-1 flex-col border border-[#808080] bg-[#dddddd]">
            <section className="flex min-h-0 flex-[594] border-b border-black">
              <div className="relative flex-1">
                <PricePlot />
                <p className="absolute top-[3px] left-[5px] leading-4">PriceActionSwingPro(NQ JUN24 (3 59), Standard, 7, 20)</p>
              </div>
              <Axis from={33} size={593} ticks={priceTicks} tags={priceTags} />
            </section>

            <section className="flex min-h-0 flex-[197] border-b border-black">
              <div className="relative flex-1">
                <RsiPlot />
                <p className="absolute top-[21px] left-2.5 font-['Open_Sans',sans-serif] text-[13px] leading-5">Using: RSI(30,3)</p>
              </div>
              <Axis
                from={627}
                size={196}
                ticks={[
                  { label: "", at: 642.5 },
                  { label: "70", at: 675.5 },
                  { label: "60", at: 707.5 },
                  { label: "50", at: 740 },
                  { label: "40", at: 772.5 },
                  { label: "30", at: 804.5 },
                ]}
                tags={[
                  { label: "57.61", at: 715.5 },
                  { label: "47.32", at: 749.5, light: true },
                ]}
              >
                <button className="absolute top-[3px] right-0.5 flex h-[19px] w-[17px] items-center justify-center bg-[#2d2d30] text-base leading-4 text-[#b0b0b0]">F</button>
              </Axis>
            </section>

            <section className="flex min-h-0 flex-[219]">
              <div className="relative flex-1 border-b border-black">
                <ForcePlot />
                <p className="absolute top-[3px] left-[5px] leading-4">ForceIndex(NQ JUN24 (VR_T3),55)</p>
                <p className="absolute bottom-1.5 left-[5px] leading-4">© 2024 NinjaTrader, LLC</p>
              </div>
              <Axis
                from={824}
                size={219}
                ticks={[3000, 2000, 1000, 0, -1000, -2000, -3000].map((v, k) => ({ label: String(v), at: 847.5 + 31 * k }))}
                tags={[{ label: "1611.99", at: 891 }]}
              />
            </section>

            <footer className="relative mr-[60px] h-7 shrink-0">
              {times.map((t, k) => (
                <div key={k} className="absolute top-0 flex -translate-x-1/2 flex-col items-center leading-4" style={{ left: `${((33 + 59.5 * k) / 1840) * 100}%` }}>
                  <span className="mb-1 h-[5px] w-px bg-black" />
                  {t}
                </div>
              ))}
              <div className="absolute top-1.5 left-[73.500%] flex h-[21px] w-[50px] -translate-x-1/2 items-center justify-center border border-black bg-white">18:49:09</div>
            </footer>
          </main>
        </div>
        <div className="w-0.5 shrink-0 bg-[#3a3a3c]" />
      </div>
      <div className="h-0.5 shrink-0 bg-[#231c1a]" />
    </div>
  );
}
